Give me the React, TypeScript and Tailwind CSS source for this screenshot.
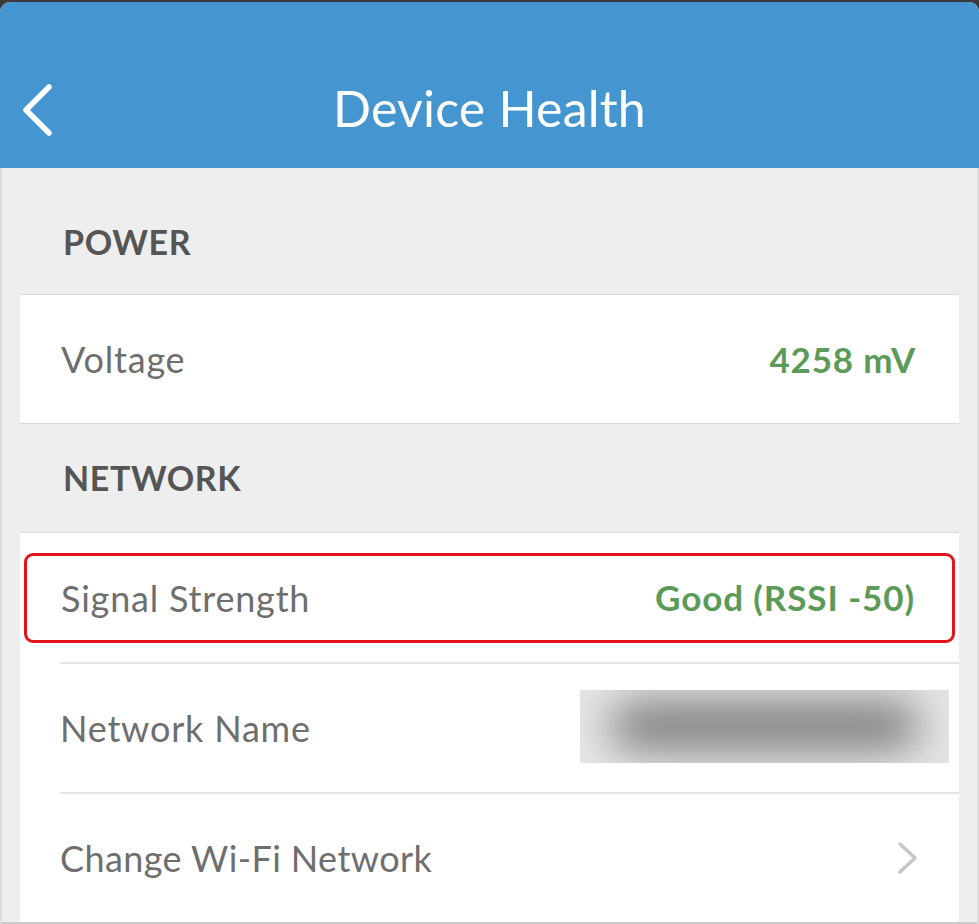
import React from 'react'

// Device Health settings screen

function BackChevron() {
  return (
    <svg width="34" height="54" viewBox="0 0 34 54" fill="none">
      <path d="M29 4 L6 27 L29 50" stroke="white" strokeWidth="5.5" strokeLinecap="round" strokeLinejoin="round" />
    </svg>
  )
}

function RowChevron() {
  return (
    <svg width="24" height="34" viewBox="0 0 24 34" fill="none">
      <path d="M5 3 L20 17 L5 31" stroke="#c6c6c6" strokeWidth="3.5" strokeLinecap="round" strokeLinejoin="round" />
    </svg>
  )
}

function SectionLabel({ label, className }: { label: string; className: string }) {
  return (
    <div className={`flex items-end pl-[61px] ${className}`}>
      <span className="text-[34px] font-bold leading-[40px] tracking-[0.6px] text-[#555555]">{label}</span>
    </div>
  )
}

export default function App() {
  return (
    <div
      className="w-[979px] h-[924px] overflow-hidden bg-[#3a3a3a] pt-[2px]"
      style={{ fontFamily: 'Lato, "Open Sans", sans-serif' }}
    >
      <div className="flex h-[922px] flex-col overflow-hidden rounded-t-[10px] bg-[#eeeeee]">
        {/* Header */}
        <div className="flex h-[166px] shrink-0 items-center bg-[#4596d0] pt-[46px]">
          <div className="flex w-[90px] translate-y-[2px] pl-[20px]">
            <BackChevron />
          </div>
          <div className="flex-1 text-center text-[50px] font-normal leading-none tracking-[0.2px] text-white">
            Device Health
          </div>
          <div className="w-[90px]" />
        </div>

        <div className="flex flex-1 flex-col border-l-2 border-r-2 border-[#dddddd]">
          <SectionLabel label="POWER" className="h-[126px] pb-[32px]" />

          <div className="mx-[18px] border-y border-[#dadada] bg-white">
            <div className="flex h-[128px] items-center justify-between pl-[41px] pr-[43px]">
              <span className="text-[36px] tracking-[0.8px] text-[#6e6e6e]">Voltage</span>
              <span className="text-[35px] font-bold tracking-[0.8px] text-[#5b9a57]">4258 mV</span>
            </div>
          </div>

          <SectionLabel label="NETWORK" className="h-[108px] pb-[34px]" />

          <div className="mx-[18px] flex flex-1 flex-col border-t border-[#dadada] bg-white">
            <div className="flex h-[129px] items-center px-[4px]">
              <div className="flex h-[90px] flex-1 items-center justify-between rounded-[9px] border-[3px] border-[#e3141b] pl-[34px] pr-[37px]">
                <span className="text-[36px] tracking-[0.8px] text-[#6e6e6e]">Signal Strength</span>
                <span className="text-[35px] font-bold tracking-[0.9px] text-[#5b9a57]">Good (RSSI -50)</span>
              </div>
            </div>

            <div className="ml-[40px] flex h-[130px] items-center justify-between border-t-2 border-[#e3e3e3] pr-[10px]">
              <span className="text-[36px] tracking-[0.8px] text-[#6e6e6e]">Network Name</span>
              <div className="flex h-[73px] w-[369px] -translate-y-[2px] items-center justify-center overflow-hidden bg-[#e6e6e6]">
                <div className="h-[46px] w-[310px] rounded-full bg-[#777777] blur-[22px]" />
              </div>
            </div>

            <div className="ml-[40px] flex h-[130px] items-center justify-between border-t-2 border-[#e3e3e3] pr-[40px]">
              <span className="text-[36px] tracking-[0.4px] text-[#6e6e6e]">Change Wi-Fi Network</span>
              <RowChevron />
            </div>
          </div>
          <div className="h-[2px] bg-[#cccccc]" />
        </div>
      </div>
    </div>
  )
}
